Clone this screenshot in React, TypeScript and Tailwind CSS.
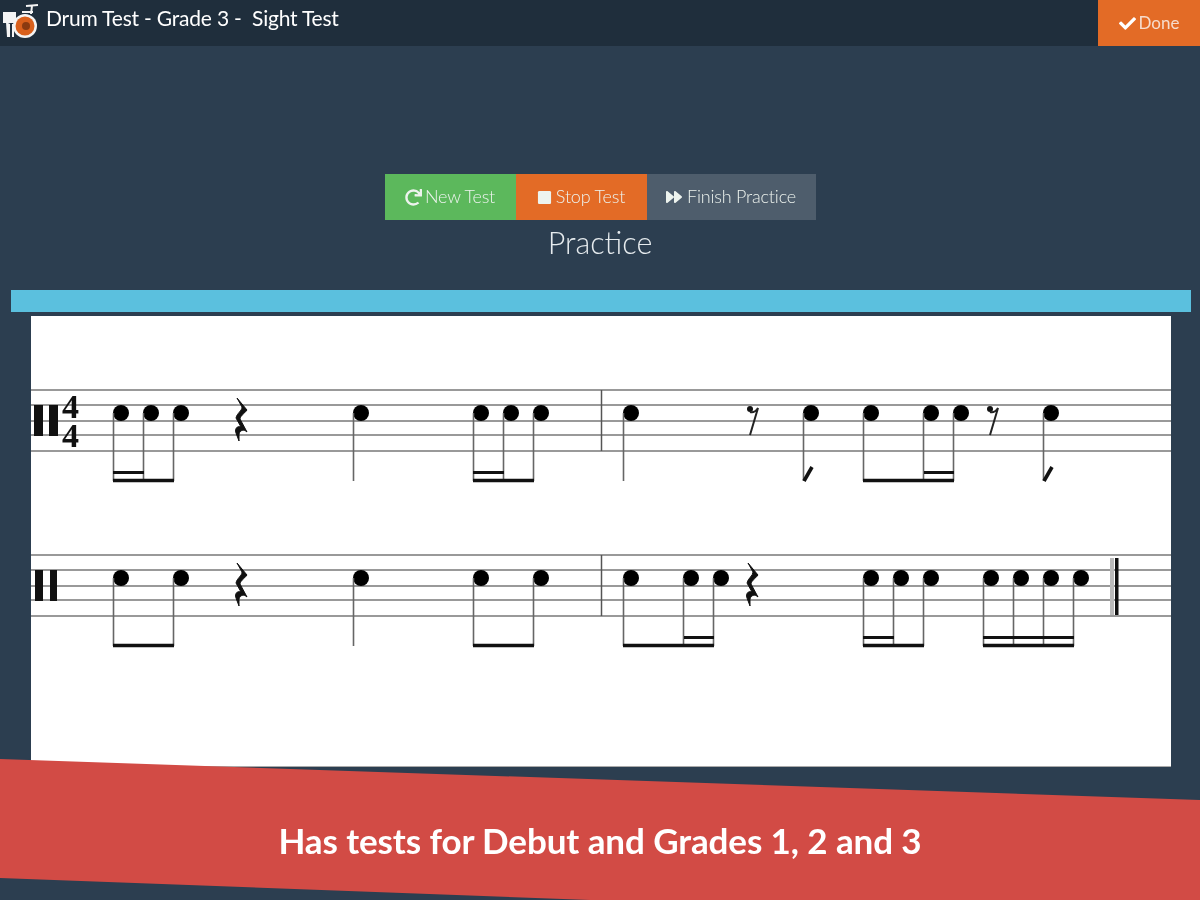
import { FaCheck, FaForward, FaRedo, FaStop } from "react-icons/fa";

const LINES1 = [390, 405, 421, 435, 451];

function Note({ x, y, stem = true, flag = false }: { x: number; y: number; stem?: boolean; flag?: boolean }) {
  return (
    <g>
      <ellipse cx={x} cy={y} rx={8} ry={8} fill="#000" />
      {stem && <line x1={x - 7.5} y1={y} x2={x - 7.5} y2={y + 68} stroke="#666" strokeWidth={1.6} />}
      {flag && <line x1={x - 7} y1={y + 68} x2={x + 1} y2={y + 54} stroke="#111" strokeWidth={3.6} />}
    </g>
  );
}

function Beam({ x1, x2, y, w = 3.5 }: { x1: number; x2: number; y: number; w?: number }) {
  return <line x1={x1} y1={y} x2={x2} y2={y} stroke="#111" strokeWidth={w} />;
}

function QuarterRest({ x, dy }: { x: number; dy: number }) {
  const d = `M${x - 1} ${dy - 15} L${x + 9} ${dy - 3} C${x + 6} ${dy + 1} ${x + 2} ${dy + 3} ${x + 2} ${dy + 6} L${x + 9} ${dy + 19} C${x + 6} ${dy + 16} ${x + 2} ${dy + 17} ${x + 1} ${dy + 21} L${x + 1} ${dy + 28} L${x - 2} ${dy + 20} C${x - 4} ${dy + 14} ${x + 1} ${dy + 13} ${x + 3} ${dy + 14} L${x - 2} ${dy + 5} C${x - 1} ${dy} ${x + 4} ${dy - 2} ${x + 4} ${dy - 6} Z`;
  return <path d={d} fill="#111" stroke="#111" strokeWidth={1} />;
}

function EighthRest({ x, y }: { x: number; y: number }) {
  return (
    <g>
      <circle cx={x} cy={y - 4} r={3} fill="#111" />
      <path d={`M${x} ${y - 1} C${x + 3} ${y} ${x + 6} ${y - 2} ${x + 8} ${y - 5} L${x} ${y + 22}`} fill="none" stroke="#222" strokeWidth={2} />
    </g>
  );
}

function Score() {
  const second = 165;
  return (
    <svg viewBox="31 316 1140 450" className="block h-full w-full blur-[0.4px]">
      {[0, second].map((o) =>
        LINES1.map((y) => (
          <line key={`${o}-${y}`} x1={31} x2={1171} y1={y + o} y2={y + o} stroke="#999" strokeWidth={2} />
        )),
      )}

      {/* First staff */}
      <rect x={34} y={405} width={9} height={31} fill="#111" />
      <rect x={49} y={405} width={9} height={31} fill="#111" />
      <text x={70.5} y={418} textAnchor="middle" fontFamily="'Liberation Serif', serif" fontWeight={700} fontSize={34} fill="#111">4</text>
      <text x={70.5} y={447} textAnchor="middle" fontFamily="'Liberation Serif', serif" fontWeight={700} fontSize={34} fill="#111">4</text>

      {[121, 151, 181, 361, 481, 511, 541, 631, 871, 931, 961].map((x) => (
        <Note key={x} x={x} y={413} />
      ))}
      <Note x={811} y={413} flag />
      <Note x={1051} y={413} flag />
      <Beam x1={113} x2={174} y={480.5} />
      <Beam x1={113} x2={144} y={472.5} w={3} />
      <Beam x1={473} x2={534} y={480.5} />
      <Beam x1={473} x2={504} y={472.5} w={3} />
      <Beam x1={863} x2={954} y={480.5} />
      <Beam x1={924} x2={954} y={472.5} w={3} />
      <QuarterRest x={238} dy={413} />
      <EighthRest x={750} y={413} />
      <EighthRest x={990} y={413} />
      <line x1={601.5} x2={601.5} y1={390} y2={451} stroke="#555" strokeWidth={1.5} />

      {/* Second staff */}
      <rect x={35} y={570} width={8} height={31} fill="#111" />
      <rect x={50} y={570} width={7} height={31} fill="#111" />
      {[121, 181, 361, 481, 541, 631, 691, 721, 871, 901, 931, 991, 1021, 1051, 1081].map((x) => (
        <Note key={x} x={x} y={578} />
      ))}
      <Beam x1={113} x2={174} y={645.5} />
      <Beam x1={473} x2={534} y={645.5} />
      <Beam x1={623} x2={714} y={645.5} />
      <Beam x1={684} x2={714} y={637.5} w={3} />
      <Beam x1={863} x2={924} y={645.5} />
      <Beam x1={863} x2={894} y={637.5} w={3} />
      <Beam x1={983} x2={1074} y={645.5} />
      <Beam x1={983} x2={1074} y={637.5} w={3} />
      <QuarterRest x={238} dy={578} />
      <QuarterRest x={749} dy={578} />
      <line x1={601.5} x2={601.5} y1={555} y2={616} stroke="#555" strokeWidth={1.5} />
      <rect x={1110} y={558} width={4} height={57} fill="#bbb" />
      <rect x={1115} y={558} width={3.5} height={57} fill="#111" />
    </svg>
  );
}

function DrumLogo() {
  return (
    <svg viewBox="0 0 40 40" className="h-10 w-10 shrink-0 blur-[0.4px]">
      <rect x="3" y="12" width="13" height="11" fill="#f4f4f4" />
      <path d="M6 22 L10 24 L10 37 L7 37 Z" fill="#f4f4f4" />
      <line x1="13" y1="24" x2="13" y2="37" stroke="#f4f4f4" strokeWidth="2" />
      <circle cx="25" cy="26" r="12" fill="#f4f4f4" />
      <circle cx="25" cy="26" r="9.5" fill="#d9601c" />
      <circle cx="26" cy="26" r="4" fill="#8a3a10" />
      <path d="M26 6 L38 5 M32 6 L31 14 M22 12 L33 12" stroke="#f4f4f4" strokeWidth="2" fill="none" />
    </svg>
  );
}

export default function App() {
  return (
    <div className="relative h-[900px] w-[1200px] overflow-hidden bg-[#2c3e50] font-['Lato','Noto_Sans',sans-serif] text-white">
      <header className="flex h-[46px] items-start justify-between bg-[#1f2e3c]">
        <div className="flex items-center">
          <DrumLogo />
          <span className="mb-[4px] ml-[6px] whitespace-pre text-[21px] leading-[36px] tracking-[-0.2px] blur-[0.4px]">Drum Test - Grade 3 -  Sight Test</span>
        </div>
        <button className="flex h-[46px] w-[102px] items-center justify-center gap-[3px] bg-[#e36b26] text-[17px] text-[#f6dccd]">
          <FaCheck className="text-[17px] text-white" />
          <span className="blur-[0.4px]">Done</span>
        </button>
      </header>

      <main className="flex flex-col items-center">
        <div className="mt-[128px] flex h-[46px] text-[18px] font-light tracking-[-0.2px] text-[#edf3ee]">
          <button className="flex w-[131px] items-center justify-center gap-[3px] bg-[#5cb85c]">
            <FaRedo className="text-[17px]" />
            <span className="mb-[1px] blur-[0.4px]">New Test</span>
          </button>
          <button className="flex w-[131px] items-center justify-center gap-[4px] bg-[#e36b26]">
            <FaStop className="text-[15px]" />
            <span className="mb-[1px] blur-[0.4px]">Stop Test</span>
          </button>
          <button className="flex w-[169px] items-center justify-center gap-[5px] bg-[#4e5d6c]">
            <FaForward className="text-[16px]" />
            <span className="mb-[1px] blur-[0.4px]">Finish Practice</span>
          </button>
        </div>
        <h1 className="mt-[3px] text-[30.5px] font-light leading-[38px] text-[#e6ebee] blur-[0.4px]">Practice</h1>
        <div className="ml-[2px] mt-[29px] h-[22px] w-[1180px] bg-[#5bc0de]" />
        <div className="ml-[2px] mt-[4px] box-content h-[450px] w-[1140px] border-b border-[#aaa] bg-white">
          <Score />
        </div>
      </main>

      <div className="absolute inset-x-0 bottom-0 flex h-[141px] items-start justify-center bg-[#d24b45] pt-[58px] [clip-path:polygon(0_0,100%_41px,100%_100%,590px_100%,0_119px)]">
        <span className="text-[35px] font-bold leading-[46px] tracking-[-0.1px] blur-[0.4px]">Has tests for Debut and Grades 1, 2 and 3</span>
      </div>
    </div>
  );
}
